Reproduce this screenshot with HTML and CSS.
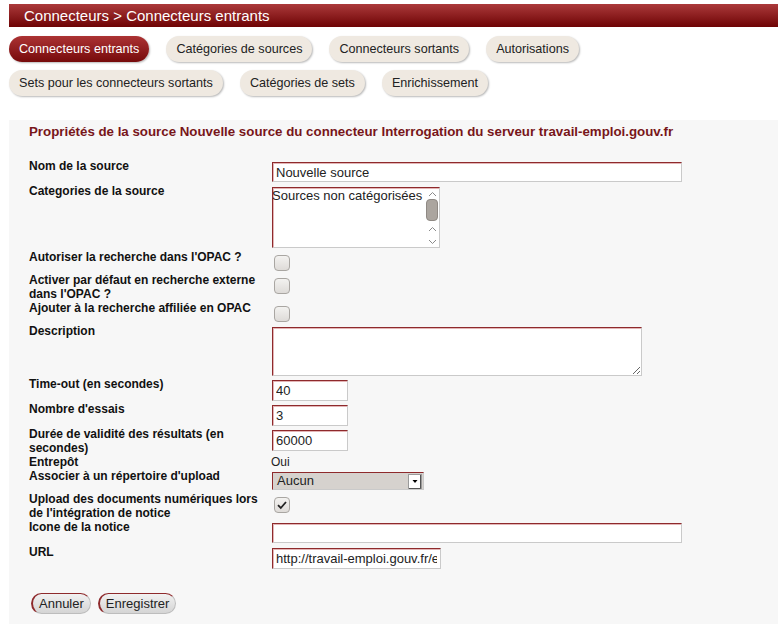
FILE: index.html
```html
<!DOCTYPE html>
<html lang="fr">
<head>
<meta charset="utf-8">
<title>Connecteurs entrants</title>
<link rel="stylesheet" href="styles.css">
</head>
<body>
<div class="page">
  <h1 class="crumb">Connecteurs &gt; Connecteurs entrants</h1>
  <nav class="tabs">
    <div class="tab-row">
      <a class="tab active">Connecteurs entrants</a>
      <a class="tab">Catégories de sources</a>
      <a class="tab">Connecteurs sortants</a>
      <a class="tab">Autorisations</a>
    </div>
    <div class="tab-row">
      <a class="tab">Sets pour les connecteurs sortants</a>
      <a class="tab">Catégories de sets</a>
      <a class="tab">Enrichissement</a>
    </div>
  </nav>
  <section class="panel">
    <h2 class="title">Propriétés de la source Nouvelle source du connecteur Interrogation du serveur travail-emploi.gouv.fr</h2>
    <div class="form">
      <div class="row">
        <div class="lbl">Nom de la source</div>
        <div class="field"><input class="text wide" value="Nouvelle source"></div>
      </div>
      <div class="row">
        <div class="lbl">Categories de la source</div>
        <div class="field">
          <div class="listbox">
            <div class="opt">Sources non catégorisées</div>
            <div class="vscroll">
              <svg class="chev" width="9" height="6" viewBox="0 0 9 6"><path d="M1 5 L4.5 1.5 L8 5" fill="none" stroke="#8a8a8a" stroke-width="1"/></svg>
              <div class="thumb"></div>
              <svg class="chev gap" width="9" height="6" viewBox="0 0 9 6"><path d="M1 5 L4.5 1.5 L8 5" fill="none" stroke="#8a8a8a" stroke-width="1"/></svg>
              <svg class="chev low" width="9" height="6" viewBox="0 0 9 6"><path d="M1 1 L4.5 4.5 L8 1" fill="none" stroke="#8a8a8a" stroke-width="1"/></svg>
            </div>
          </div>
        </div>
      </div>
      <div class="row">
        <div class="lbl">Autoriser la recherche dans l'OPAC ?</div>
        <div class="field"><span class="check"></span></div>
      </div>
      <div class="row">
        <div class="lbl">Activer par défaut en recherche externe dans l'OPAC ?</div>
        <div class="field"><span class="check"></span></div>
      </div>
      <div class="row">
        <div class="lbl">Ajouter à la recherche affiliée en OPAC</div>
        <div class="field"><span class="check"></span></div>
      </div>
      <div class="row">
        <div class="lbl">Description</div>
        <div class="field"><textarea class="area"></textarea></div>
      </div>
      <div class="row">
        <div class="lbl">Time-out (en secondes)</div>
        <div class="field"><input class="text short" value="40"></div>
      </div>
      <div class="row">
        <div class="lbl">Nombre d'essais</div>
        <div class="field"><input class="text short" value="3"></div>
      </div>
      <div class="row">
        <div class="lbl">Durée de validité des résultats (en secondes)</div>
        <div class="field"><input class="text short" value="60000"></div>
      </div>
      <div class="row">
        <div class="lbl">Entrepôt</div>
        <div class="field plain">Oui</div>
      </div>
      <div class="row">
        <div class="lbl">Associer à un répertoire d'upload</div>
        <div class="field">
          <div class="select">
            <span class="sel-val">Aucun</span>
            <svg class="sel-btn" width="14" height="15" viewBox="0 0 14 15"><rect x="0.5" y="0.5" width="13" height="14" fill="#fff" stroke="#9a9a9a"/><path d="M12.5 1 V14.5 H1" fill="none" stroke="#555"/><path d="M4.5 6 H9.5 L7 9 Z" fill="#000"/></svg>
          </div>
        </div>
      </div>
      <div class="row">
        <div class="lbl">Upload des documents numériques lors de l'intégration de notice</div>
        <div class="field"><span class="check checked"><svg width="16" height="16" viewBox="0 0 16 16"><path d="M4 8.2 L6.8 11 L12 5" fill="none" stroke="#222" stroke-width="1.8"/></svg></span></div>
      </div>
      <div class="row">
        <div class="lbl">Icone de la notice</div>
        <div class="field"><input class="text wide" value=""></div>
      </div>
      <div class="row">
        <div class="lbl">URL</div>
        <div class="field"><input class="text url" value="http://travail-emploi.gouv.fr/emploi"></div>
      </div>
    </div>
    <div class="actions">
      <button class="btn">Annuler</button>
      <button class="btn">Enregistrer</button>
    </div>
  </section>
</div>
</body>
</html>
```
FILE: styles.css
```css
html, body {
  margin: 0;
  padding: 0;
  background: #fff;
}
body {
  font-family: "Liberation Sans", Arial, sans-serif;
  color: #111;
}
.page {
  margin-left: 9px;
  width: 769px;
  padding-top: 4px;
}
.crumb {
  margin: 0;
  height: 23px;
  line-height: 23px;
  padding-left: 15px;
  font-size: 15px;
  font-weight: normal;
  color: #fff;
  background: linear-gradient(#ab3a3b, #6e0304);
}
.tabs {
  margin-top: 9px;
}
.tab-row {
  display: flex;
  gap: 17px;
}
.tab-row + .tab-row {
  margin-top: 8px;
}
.tab {
  display: block;
  height: 26px;
  line-height: 26px;
  padding: 0 10px;
  border-radius: 13px;
  background: #efe9e1;
  color: #222;
  font-size: 12.6px;
  box-shadow: 1px 1px 2px rgba(0, 0, 0, 0.28);
  white-space: nowrap;
}
.tab.active {
  background: linear-gradient(#ac3334, #760a0b);
  color: #fff;
}
.panel {
  margin-top: 24px;
  background: #f7f7f7;
  padding: 4px 20px 10px;
}
.title {
  margin: 0;
  font-size: 13.3px;
  line-height: 16px;
  font-weight: bold;
  color: #78161a;
}
.form {
  margin-top: 19px;
}
.row {
  display: flex;
  align-items: flex-start;
}
.lbl {
  flex: none;
  width: 243px;
  font-size: 12px;
  font-weight: bold;
  line-height: 14px;
  color: #111;
}
.field {
  padding-top: 3px;
}
.field.plain {
  padding-top: 0;
  margin-left: -1px;
  font-size: 12px;
  line-height: 14px;
  color: #222;
}
.text {
  display: block;
  box-sizing: border-box;
  margin: 0 0 1px;
  height: 21px;
  padding: 0 3px;
  font-family: "Liberation Sans", Arial, sans-serif;
  font-size: 13px;
  color: #222;
  background: #fff;
  border: 1px solid #cacaca;
  border-top-color: #8e2a2c;
  border-left-color: #8e2a2c;
  box-shadow: inset 1px 1px 0 #e3b5b6;
  outline: none;
}
.text.wide {
  width: 410px;
  height: 20px;
  margin-bottom: 2px;
}
.text.short {
  width: 76px;
}
.text.url {
  width: 169px;
}
.listbox {
  box-sizing: border-box;
  width: 168px;
  height: 61px;
  margin-bottom: 2px;
  display: flex;
  background: #fff;
  border: 1px solid #cacaca;
  border-top-color: #8e2a2c;
  border-left-color: #8e2a2c;
  box-shadow: inset 1px 1px 0 #e3b5b6;
}
.opt {
  flex: 1;
  font-size: 13px;
  line-height: 15px;
  color: #222;
  white-space: nowrap;
  overflow: hidden;
  margin-left: -1px;
}
.vscroll {
  flex: none;
  width: 14px;
  display: flex;
  flex-direction: column;
  align-items: center;
  padding-top: 3px;
}
.chev {
  display: block;
}
.thumb {
  width: 12px;
  height: 22px;
  margin-top: 2px;
  border-radius: 4px;
  background: #aba59f;
  border: 1px solid #8f8984;
  box-sizing: border-box;
}
.chev.gap {
  margin-top: 5px;
}
.chev.low {
  margin-top: 7px;
}
.check {
  display: block;
  box-sizing: border-box;
  width: 16px;
  height: 16px;
  margin: 2px 0 2px 2px;
  border-radius: 4px;
  border: 1px solid #a9a6a2;
  background: linear-gradient(#f3f2f0, #dedbd8);
}
.check svg {
  display: block;
  margin: -1px 0 0 -1px;
}
.area {
  display: block;
  box-sizing: border-box;
  width: 370px;
  height: 49px;
  margin: 0 0 1px;
  padding: 2px;
  background: #fff;
  border: 1px solid #cacaca;
  border-top-color: #8e2a2c;
  border-left-color: #8e2a2c;
  box-shadow: inset 1px 1px 0 #e3b5b6;
  outline: none;
  font-family: "Liberation Sans", Arial, sans-serif;
}
.select {
  box-sizing: border-box;
  width: 152px;
  height: 18px;
  margin-bottom: 2px;
  display: flex;
  align-items: center;
  background: #d6d2ce;
  border: 1px solid #cacaca;
  border-top-color: #8e2a2c;
  border-left-color: #8e2a2c;
  padding-left: 4px;
  padding-right: 1px;
}
.sel-val {
  flex: 1;
  font-size: 13px;
  line-height: 16px;
  color: #222;
}
.sel-btn {
  display: block;
  flex: none;
}
.actions {
  margin-top: 23px;
  margin-left: 2px;
  display: flex;
  gap: 7px;
}
.btn {
  height: 21px;
  padding: 0 6px;
  font-family: "Liberation Sans", Arial, sans-serif;
  font-size: 13px;
  color: #222;
  border-radius: 11px;
  border: 1px solid #bdbdbd;
  border-top-color: #8e2a2c;
  border-left: 2px solid #8e2a2c;
  background: linear-gradient(#f1f1f1, #d5d5d5);
}
```
